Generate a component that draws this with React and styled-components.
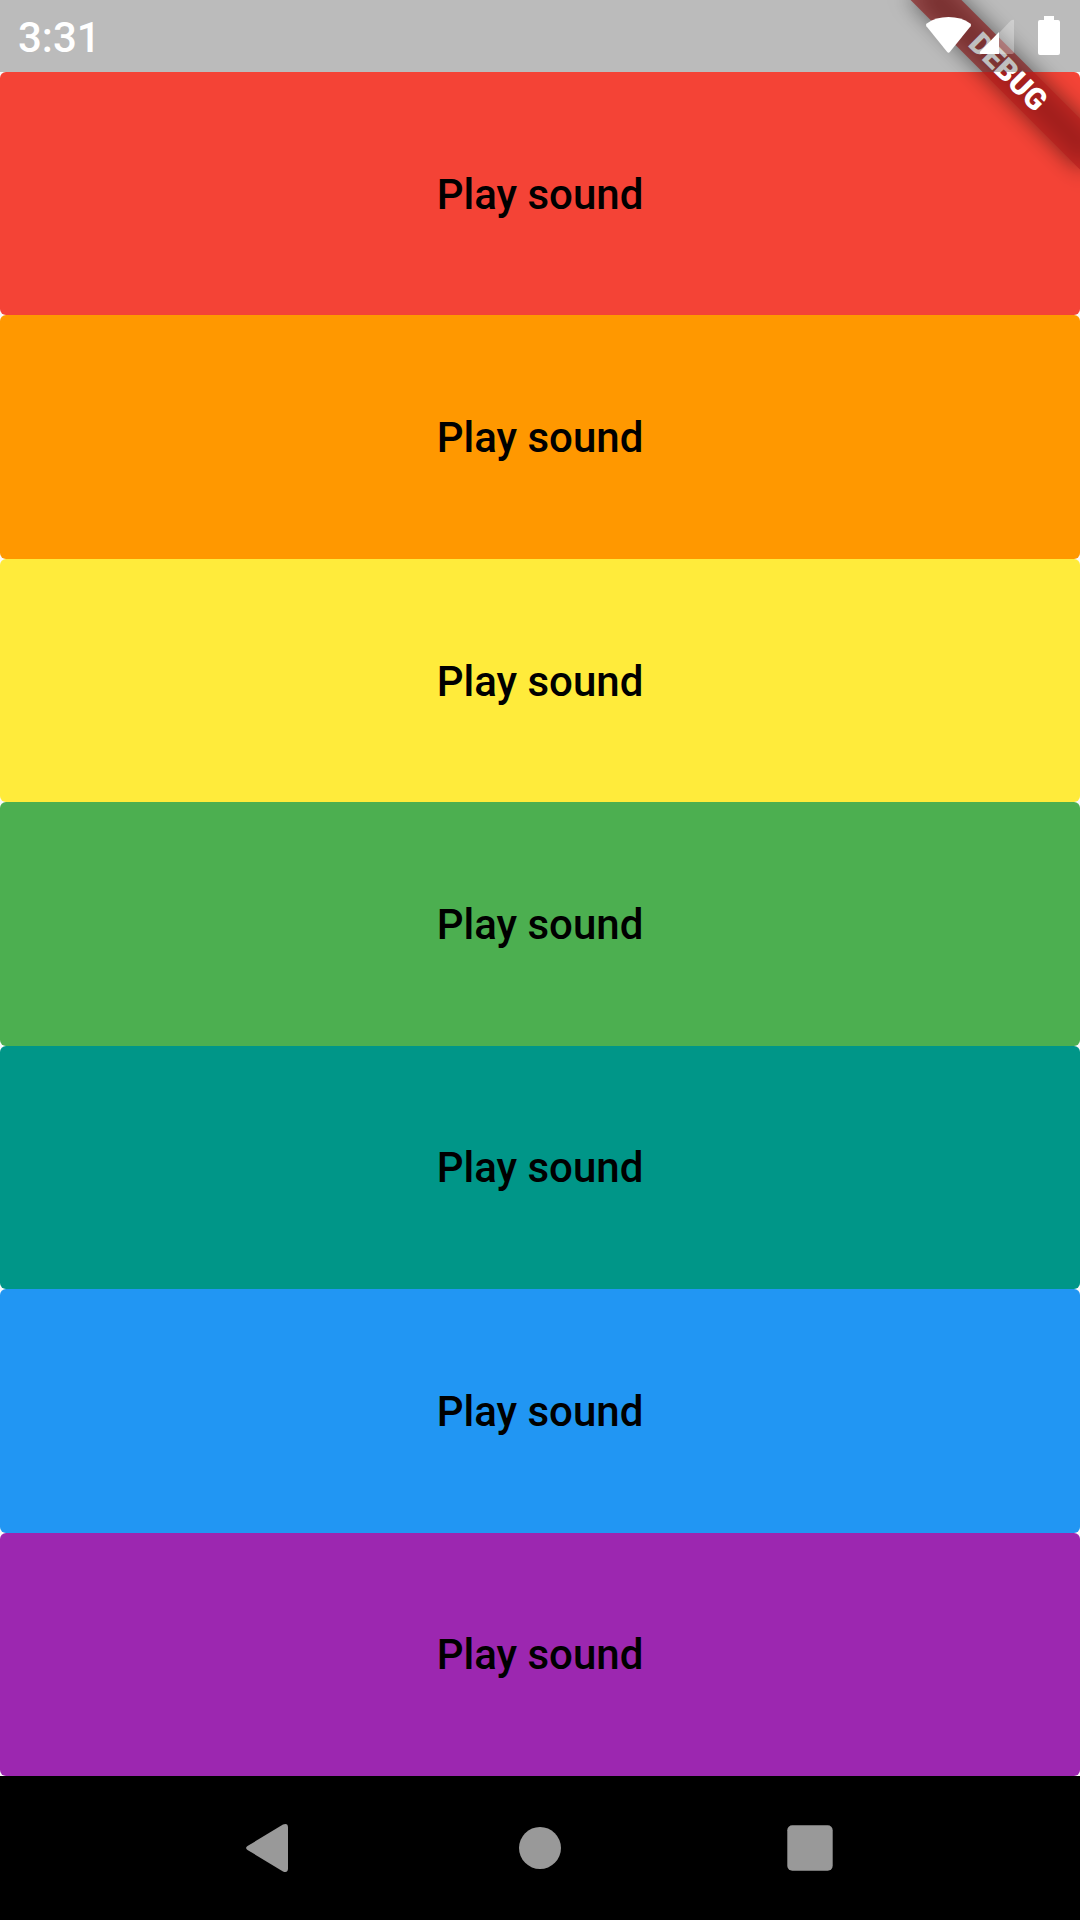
import React from "react";
import styled, { createGlobalStyle } from "styled-components";

const GlobalStyle = createGlobalStyle`
  body {
    margin: 0;
    background: #fafafa;
    font-family: Roboto, "Liberation Sans", sans-serif;
  }
`;

const Screen = styled.div`
  position: relative;
  display: flex;
  flex-direction: column;
  min-height: 100vh;
  overflow: hidden;
`;

const StatusBar = styled.header`
  position: relative;
  z-index: 2;
  display: flex;
  align-items: center;
  justify-content: space-between;
  height: 72px;
  padding: 0 18px;
  box-sizing: border-box;
  background: rgba(0, 0, 0, 0.25);
  color: #fff;
`;

const Clock = styled.time`
  padding-top: 4px;
  font-size: 42px;
  font-weight: 500;
  line-height: 48px;
`;

const StatusIcons = styled.svg`
  display: block;
  width: 138px;
  height: 72px;
`;

const Banner = styled.div`
  position: absolute;
  z-index: 1;
  top: 54px;
  right: -48px;
  width: 240px;
  height: 36px;
  transform: rotate(45deg);
  pointer-events: none;
`;

const BannerShadow = styled.div`
  position: absolute;
  inset: 0;
  background: rgba(0, 0, 0, 0.5);
  filter: blur(11px);
`;

const BannerLabel = styled.div`
  position: absolute;
  inset: 0;
  background: rgba(183, 28, 28, 0.627);
  color: #fff;
  font-family: "Roboto Black", Roboto, "Liberation Sans", sans-serif;
  font-size: 30px;
  font-weight: 900;
  line-height: 36px;
  text-align: center;
`;

const Keys = styled.main`
  flex: 1;
  display: flex;
  flex-direction: column;
`;

const KeyButton = styled.button`
  flex: 1;
  min-height: 108px;
  padding: 2px 48px 0;
  border: 0;
  border-radius: 6px;
  background: ${(p) => p.$color};
  color: #000;
  font-family: inherit;
  font-size: 42px;
  font-weight: 500;
  line-height: 48px;
  cursor: pointer;
`;

const NavBar = styled.nav`
  display: flex;
  justify-content: center;
  height: 144px;
  background: #000;
`;

const NavButton = styled.button`
  display: flex;
  align-items: center;
  justify-content: center;
  width: 25%;
  padding: 0;
  border: 0;
  background: transparent;
  cursor: pointer;
`;

const NavIcon = styled.svg`
  width: 48px;
  height: 48px;
  fill: #999;
`;

const COLORS = ["#f44336", "#ff9800", "#ffeb3b", "#4caf50", "#009688", "#2196f3", "#9c27b0"];

export default function App() {
  return (
    <Screen>
      <GlobalStyle />
      <StatusBar>
        <Clock>3:31</Clock>
        <StatusIcons viewBox="0 0 138 72" fill="#fff" aria-hidden="true">
          <path d="M2.4 26.2Q1.2 24.6 2.8 23.4Q12 17 24.500 17T46.200 23.400Q47.800 24.600 46.600 26.200L26 51.800Q24.500 53.600 23 51.800Z" />
          <path fillOpacity="0.3" d="M75 33L86.600 20.800Q88 19.400 90 19.700V52Q90 54 88 54H75Z" />
          <path d="M75 32V54H57Q54.800 54 56.500 51.300Z" />
          <path d="M120 16h10v4h4q2 0 2 2v31q0 2-2 2h-18q-2 0-2-2V22q0-2 2-2h4z" />
        </StatusIcons>
      </StatusBar>
      <Banner>
        <BannerShadow />
        <BannerLabel>DEBUG</BannerLabel>
      </Banner>
      <Keys>
        {COLORS.map((color) => (
          <KeyButton key={color} type="button" $color={color}>
            Play sound
          </KeyButton>
        ))}
      </Keys>
      <NavBar>
        <NavButton type="button" aria-label="Back">
          <NavIcon viewBox="0 0 48 48">
            <path d="M1.500 22L37 .6Q42 -1.200 42 3.500V44.500Q42 49.200 37 47.400L1.500 26Q-1.300 24 1.500 22Z" />
          </NavIcon>
        </NavButton>
        <NavButton type="button" aria-label="Home">
          <NavIcon viewBox="0 0 48 48">
            <circle cx="24" cy="24" r="21" />
          </NavIcon>
        </NavButton>
        <NavButton type="button" aria-label="Recent apps">
          <NavIcon viewBox="0 0 48 48">
            <rect x="1.300" y="1.300" width="45.400" height="45.400" rx="5" />
          </NavIcon>
        </NavButton>
      </NavBar>
    </Screen>
  );
}
